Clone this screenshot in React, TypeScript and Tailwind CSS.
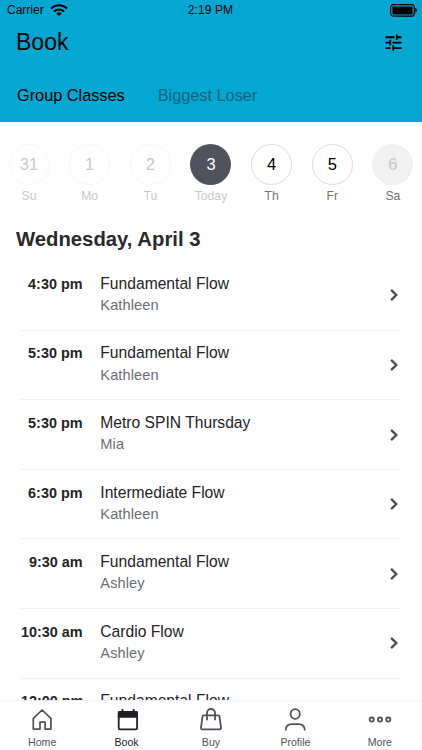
import React from 'react';

type Day = { num: string; label: string; state: 'past' | 'today' | 'open' | 'closed' };

const days: Day[] = [
  { num: '31', label: 'Su', state: 'past' },
  { num: '1', label: 'Mo', state: 'past' },
  { num: '2', label: 'Tu', state: 'past' },
  { num: '3', label: 'Today', state: 'today' },
  { num: '4', label: 'Th', state: 'open' },
  { num: '5', label: 'Fr', state: 'open' },
  { num: '6', label: 'Sa', state: 'closed' },
];

const circleStyles = {
  past: 'border border-[#f7f7f7] text-[#c9c9c9]',
  today: 'bg-[#50525e] text-white',
  open: 'border border-[#dcdcdc] text-black',
  closed: 'bg-[#f1f1f1] text-[#c6c6c6]',
};

const classes = [
  { time: '4:30 pm', name: 'Fundamental Flow', teacher: 'Kathleen' },
  { time: '5:30 pm', name: 'Fundamental Flow', teacher: 'Kathleen' },
  { time: '5:30 pm', name: 'Metro SPIN Thursday', teacher: 'Mia' },
  { time: '6:30 pm', name: 'Intermediate Flow', teacher: 'Kathleen' },
  { time: '9:30 am', name: 'Fundamental Flow', teacher: 'Ashley' },
  { time: '10:30 am', name: 'Cardio Flow', teacher: 'Ashley' },
  { time: '12:00 pm', name: 'Fundamental Flow', teacher: 'Ashley' },
];

const WifiIcon = () => (
  <svg width="18" height="13" viewBox="0 0 18 13" fill="none" stroke="black" strokeWidth="2">
    <path d="M1 4.5C5.5 0 12.5 0 17 4.5" />
    <path d="M4 7.5c2.9-2.8 7.1-2.8 10 0" />
    <path d="M9 12.1 6.3 9.4c1.6-1.4 3.8-1.4 5.4 0z" fill="black" stroke="none" />
  </svg>
);

const BatteryIcon = () => (
  <svg width="28" height="13" viewBox="0 0 28 13" fill="none">
    <rect x="0.7" y="0.7" width="23.6" height="11.4" rx="2.6" stroke="black" strokeWidth="1.2" />
    <rect x="2.4" y="2.4" width="20.2" height="8" rx="0.8" fill="black" />
    <path d="M25.3 4.1c2.2.6 2.2 4 0 4.6z" fill="black" />
  </svg>
);

const FilterIcon = () => (
  <svg width="17" height="17" viewBox="0 0 17 17" fill="none" stroke="black" strokeWidth="1.9">
    <path d="M.5 3.2h9M11.8.4V6M11.8 3.2h4.8" />
    <path d="M.5 8.6h4.7M5.2 5.8v5.6M7.6 8.6h9" />
    <path d="M.5 14.1h5M8.2 11.3v5.6M8.2 14.1h8.4" />
  </svg>
);

const ChevronIcon = () => (
  <svg width="8" height="12" viewBox="0 0 8 12" fill="none" stroke="#4a4b52" strokeWidth="2.3">
    <path d="M1.1.9 6.3 6l-5.2 5.1" />
  </svg>
);

const HomeIcon = () => (
  <svg width="24" height="24" viewBox="0 0 24 24" fill="none" stroke="#4f515a" strokeWidth="1.7" strokeLinejoin="round">
    <path d="M3.3 10.4 12.1 2l8.8 8.4v10.7h-5.8v-6.9H10v6.9H3.3z" />
  </svg>
);

const BookIcon = () => (
  <svg width="24" height="24" viewBox="0 0 24 24" fill="none">
    <rect x="3.7" y="3.9" width="18.4" height="17.5" rx="1.6" stroke="#202127" strokeWidth="1.8" />
    <path d="M2.8 9.8V4.6C2.8 3.7 3.5 3 4.4 3h2.2V1h1.8v2h9.4V1h1.8v2h1.8c.9 0 1.6.7 1.6 1.6v5.2z" fill="#202127" />
  </svg>
);

const BuyIcon = () => (
  <svg width="24" height="24" viewBox="0 0 24 24" fill="none" stroke="#4f515a" strokeWidth="1.8" strokeLinecap="round" strokeLinejoin="round">
    <path d="M4.5 7.4h15c.5 0 .8.3.9.8l1.6 11.5c.1.9-.5 1.6-1.4 1.6H3.4c-.9 0-1.5-.7-1.4-1.6L3.6 8.2c.1-.5.4-.8.9-.8z" />
    <path d="M8 11.5V5.1c0-2.3 1.8-4.1 4-4.1s4 1.8 4 4.1v6.4" />
  </svg>
);

const ProfileIcon = () => (
  <svg width="24" height="24" viewBox="0 0 24 24" fill="none" stroke="#4f515a" strokeWidth="1.8">
    <ellipse cx="12.2" cy="6" rx="4.6" ry="4.9" />
    <path d="M2.6 22.6c0-4.2 2.8-6.4 6.5-6.4h6.2c3.7 0 6.5 2.2 6.5 6.4" />
  </svg>
);

const MoreIcon = () => (
  <svg width="24" height="24" viewBox="0 0 24 24" fill="none" stroke="#4f515a" strokeWidth="1.8">
    <circle cx="3.7" cy="11.6" r="2.1" />
    <circle cx="12" cy="11.6" r="2.1" />
    <circle cx="20.3" cy="11.6" r="2.1" />
  </svg>
);

const tabs = [
  { label: 'Home', icon: <HomeIcon /> },
  { label: 'Book', icon: <BookIcon />, active: true },
  { label: 'Buy', icon: <BuyIcon /> },
  { label: 'Profile', icon: <ProfileIcon /> },
  { label: 'More', icon: <MoreIcon /> },
];

const App: React.FC = () => {
  return (
    <div className="flex h-[750px] w-[422px] flex-col overflow-hidden bg-white font-['Liberation_Sans',Arial,sans-serif] text-black">
      <header className="h-[122px] shrink-0 bg-[#04a7d1]">
        <div className="grid h-5 grid-cols-3 items-center pr-1 pl-[7px] text-[12px] leading-5">
          <div className="flex items-center gap-[6px]">
            <span>Carrier</span>
            <WifiIcon />
          </div>
          <span className="pr-1 text-center leading-[18px] tracking-[0.1px]">2:19 PM</span>
          <div className="flex justify-end">
            <BatteryIcon />
          </div>
        </div>
        <div className="flex h-[45px] items-center justify-between pr-5 pl-4">
          <h1 className="text-[23px]">Book</h1>
          <FilterIcon />
        </div>
        <div className="flex h-[61px] items-center gap-[33px] pl-[17px] text-[16.3px]">
          <span>Group Classes</span>
          <span className="text-[#04657f]">Biggest Loser</span>
        </div>
      </header>

      <div className="flex h-[96px] shrink-0 justify-between px-[8.5px] pt-[22px]">
        {days.map((day) => (
          <div key={day.num} className="flex w-[41px] flex-col items-center">
            <div className={`flex h-[41px] w-[41px] items-center justify-center rounded-full text-[16.5px] ${circleStyles[day.state]}`}>
              {day.num}
            </div>
            <span
              className={`mt-[3px] text-[12.2px] leading-4 ${
                day.state === 'past' || day.state === 'today' ? 'text-[#c9c9c9]' : 'text-[#747474]'
              }`}
            >
              {day.label}
            </span>
          </div>
        ))}
      </div>

      <h2 className="h-[43px] shrink-0 pl-4 text-[20.3px] leading-[43px] font-bold text-[#29292b]">Wednesday, April 3</h2>

      <main className="min-h-0 flex-1 overflow-hidden pr-[22px] pl-[21px]">
        {classes.map((item, i) => (
          <div key={i} className="flex h-[69.6px] border-b border-[#f0f0f0] pt-[12.9px]">
            <span className="w-[61.5px] shrink-0 text-right text-[14.4px] leading-5 font-bold whitespace-nowrap text-[#232325]">
              {item.time}
            </span>
            <div className="ml-[17.8px] flex-1">
              <p className="text-[15.65px] leading-5 text-[#232325]">{item.name}</p>
              <p className="mt-[1.1px] text-[14.6px] leading-5 tracking-[0.1px] text-[#6c6d74]">{item.teacher}</p>
            </div>
            <div className="mt-[5.5px] mr-[2px] flex h-8 items-center">
              <ChevronIcon />
            </div>
          </div>
        ))}
      </main>

      <nav className="grid h-[50px] shrink-0 grid-cols-5 border-t border-[#f3f3f3] bg-white">
        {tabs.map((tab) => (
          <div key={tab.label} className="flex flex-col items-center pt-[7px]">
            {tab.icon}
            <span className={`mt-[4px] text-[10.6px] leading-3 ${tab.active ? 'text-[#202127]' : 'text-[#4f515a]'}`}>
              {tab.label}
            </span>
          </div>
        ))}
      </nav>
    </div>
  );
};

export default App;
